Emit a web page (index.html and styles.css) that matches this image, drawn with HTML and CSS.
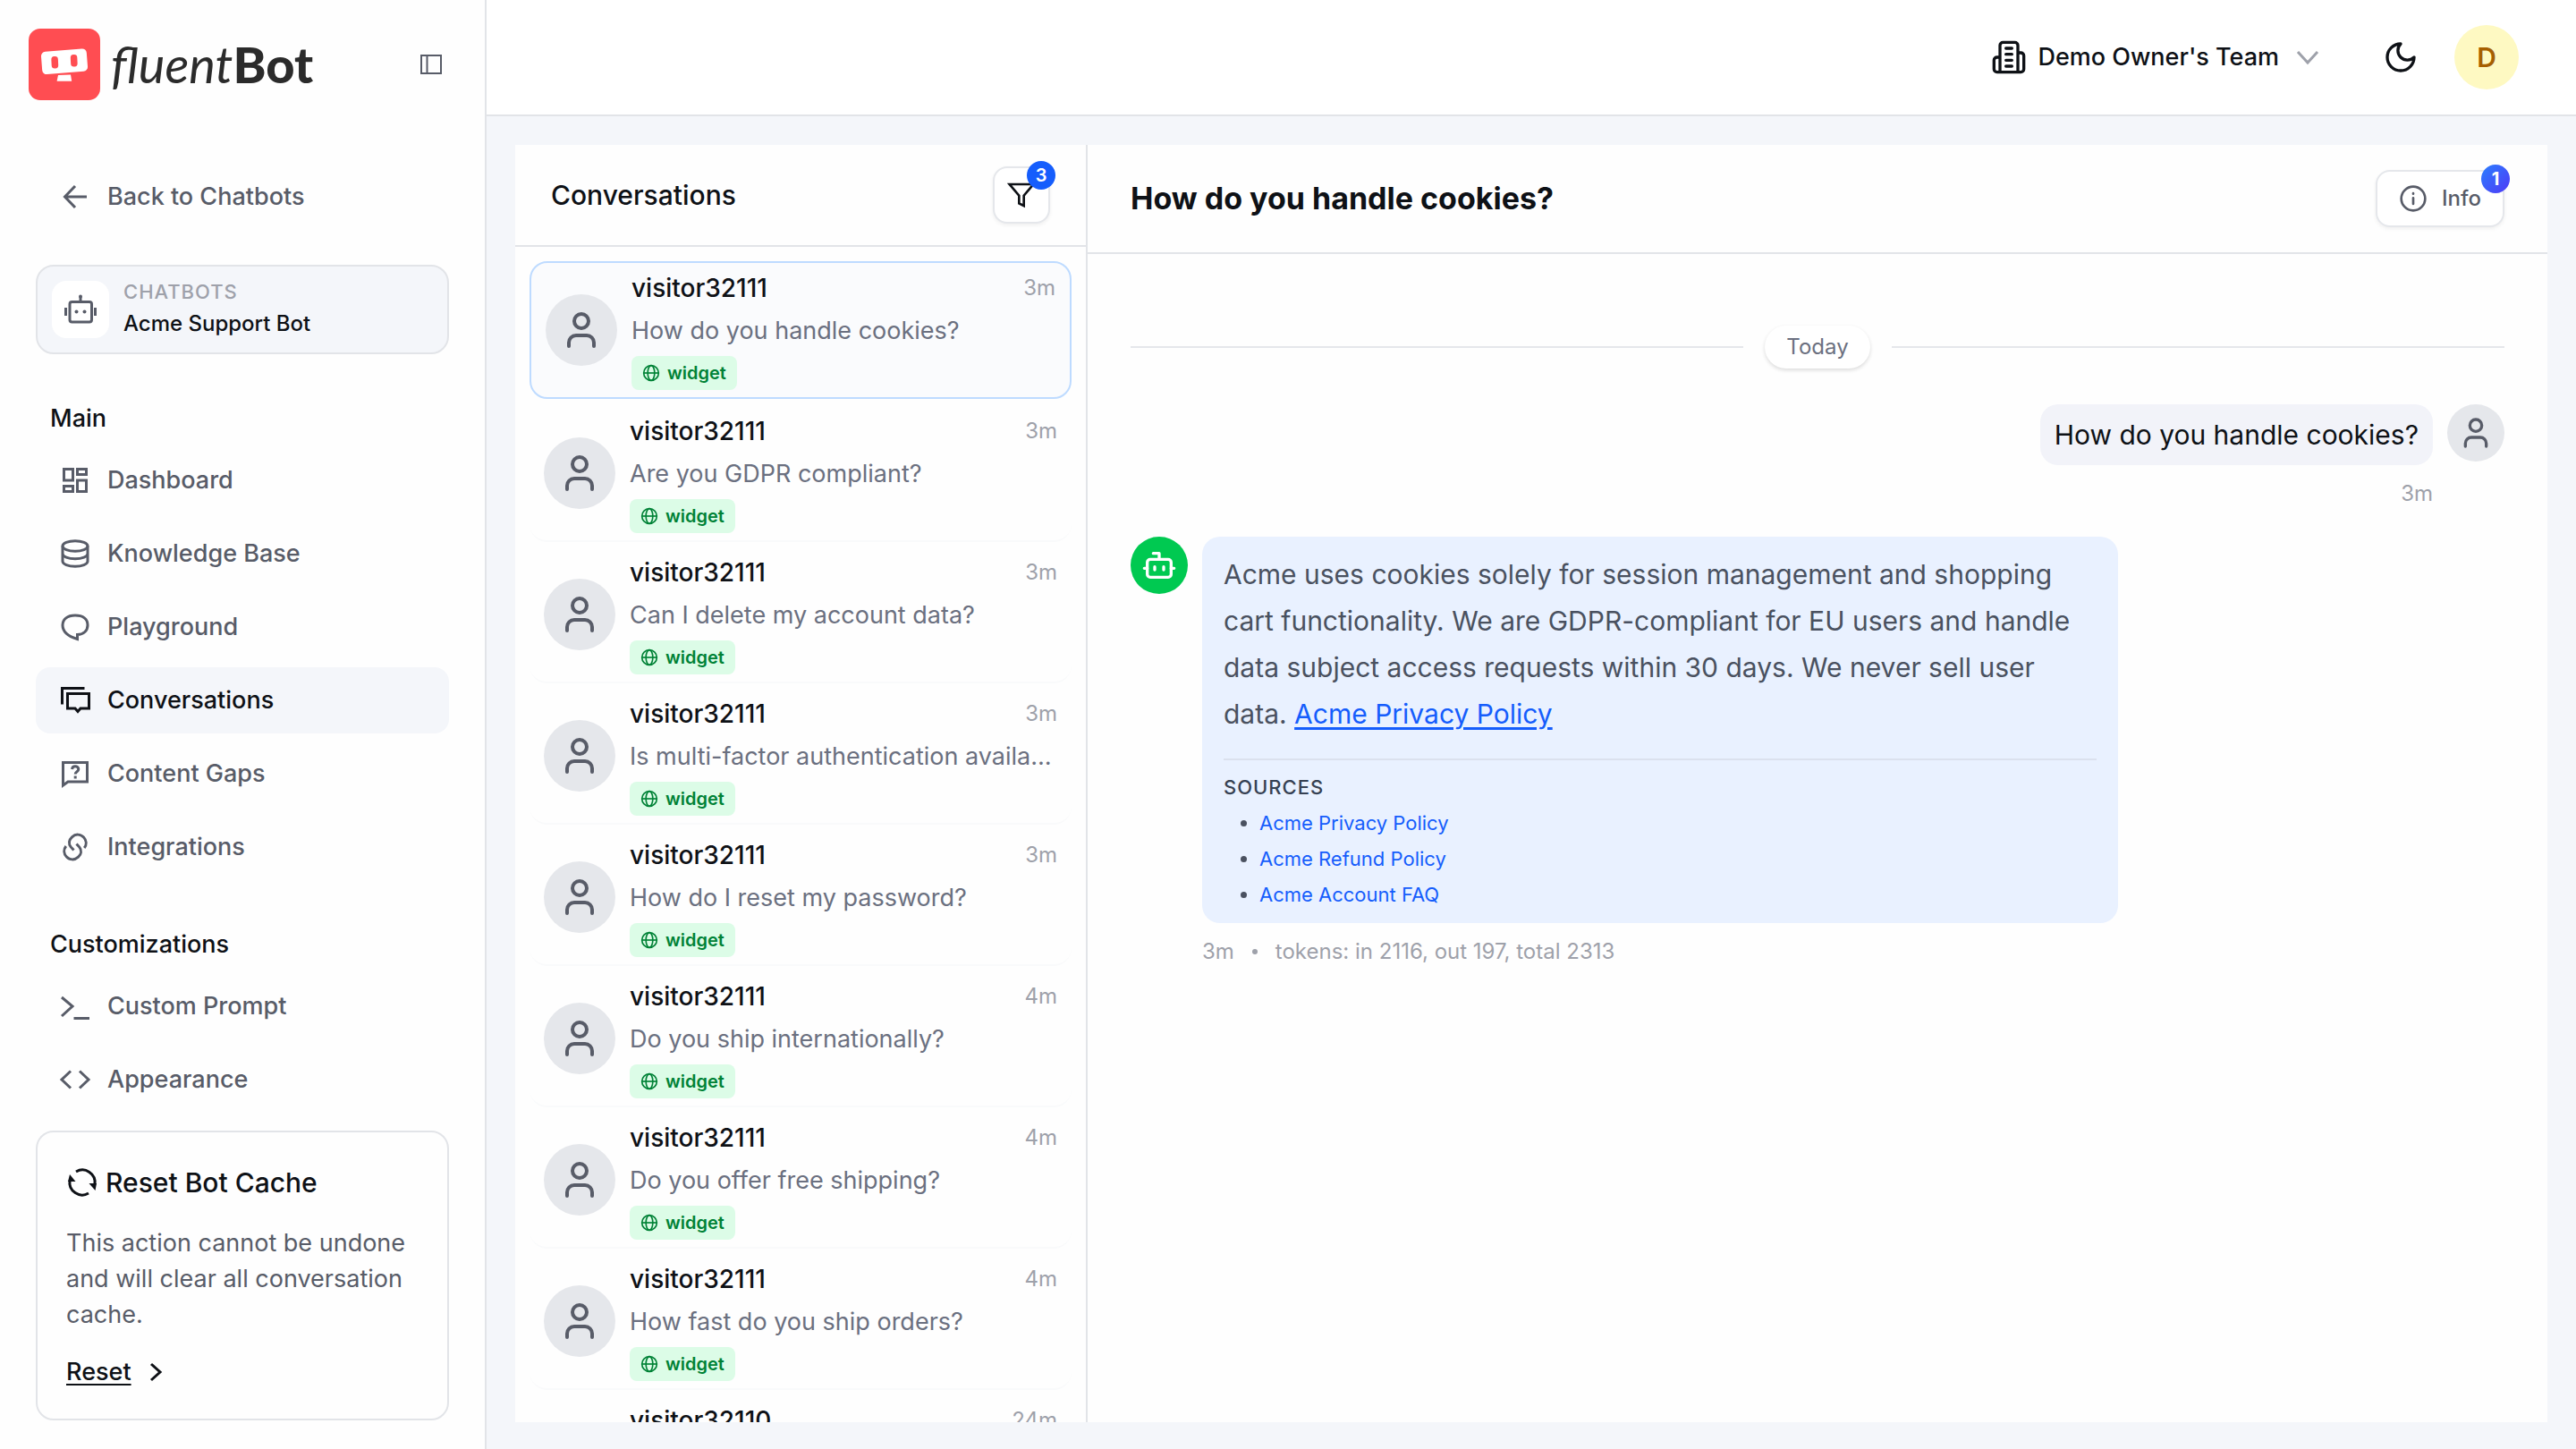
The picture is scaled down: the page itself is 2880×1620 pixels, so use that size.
FILE: index.html
```html
<!DOCTYPE html>
<html lang="en">
<head>
    <meta charset="UTF-8">
    <meta name="viewport" content="width=device-width, initial-scale=1.0">
    <title>Conversations - fluentBot</title>
    <link rel="stylesheet" href="styles.css">
</head>
<body>
    <!-- shared icons -->
    <svg class="sprite" aria-hidden="true">
        <symbol id="i-user" viewBox="0 0 24 24"><path d="M19 21v-2a4 4 0 0 0-4-4H9a4 4 0 0 0-4 4v2"/><circle cx="12" cy="7" r="4"/></symbol>
        <symbol id="i-globe" viewBox="0 0 24 24"><circle cx="12" cy="12" r="10"/><ellipse cx="12" cy="12" rx="4.6" ry="10"/><path d="M2 12h20"/></symbol>
    </svg>

    <aside class="sidebar">
        <div class="brand">
            <a href="#" class="logo" aria-label="fluentBot">
                <svg class="logo-mark" viewBox="0 0 80 80">
                    <rect width="80" height="80" rx="13" fill="#ff4d52"/>
                    <rect x="14.5" y="24" width="51" height="25.5" rx="5" fill="#fff" transform="rotate(-4.5 40 36.7)"/>
                    <rect x="25.5" y="31" width="7.5" height="13.5" rx="3.5" fill="#ff4d52" transform="rotate(-3 29 37)"/>
                    <rect x="47" y="29" width="7.5" height="13.5" rx="3.5" fill="#ff4d52" transform="rotate(-3 51 36)"/>
                    <path d="M33 52l14-.6 1.2 7.4H31.6z" fill="#fff"/>
                </svg>
                <span class="logo-text"><em>fluent</em><b>Bot</b></span>
            </a>
            <button class="collapse" aria-label="Collapse sidebar">
                <svg viewBox="0 0 24 24"><path d="M1 2h22v20H1zM7.5 2v20"/></svg>
            </button>
        </div>

        <a href="#" class="nav-item back">
            <svg viewBox="0 0 32 32"><path d="M29 16H5M16 4L4.500 16 16 28"/></svg>
            Back to Chatbots
        </a>

        <div class="bot-card">
            <span class="bot-icon">
                <svg viewBox="0 0 36 36"><rect x="6" y="9.500" width="24.500" height="22.500" rx="2.500"/><path d="M18 9V4M1.500 16v9M34.500 16v9"/><g class="solid"><circle cx="18" cy="3.500" r="2"/><circle cx="13.500" cy="20.500" r="2"/><circle cx="22.500" cy="20.500" r="2"/></g></svg>
            </span>
            <div class="bot-info">
                <span class="bot-label">CHATBOTS</span>
                <span class="bot-name">Acme Support Bot</span>
            </div>
        </div>

        <nav>
            <h3 class="nav-title">Main</h3>
            <div class="nav-list">
                <a href="#" class="nav-item">
                    <svg viewBox="0 0 32 32"><path d="M3.500 3.500h10v12.500h-10zM18.500 3.500h10v6h-10zM3.500 22.500h10v6h-10zM18.500 16h10v12.500h-10z"/></svg>
                    Dashboard
                </a>
                <a href="#" class="nav-item">
                    <svg viewBox="0 0 32 32"><ellipse cx="16" cy="7.500" rx="14" ry="5.800"/><path d="M2 7.500v17c0 3.200 6.300 5.800 14 5.800s14-2.600 14-5.800v-17M2 16c0 3.200 6.300 5.800 14 5.800S30 19.200 30 16"/></svg>
                    Knowledge Base
                </a>
                <a href="#" class="nav-item">
                    <svg viewBox="0 0 32 32"><path d="M18.500 29.500v-5c7 0 11.500-4.500 11.500-10.500C30 7 25 3 16 3S2 7.500 2 14c0 8 6.500 12.500 16.500 15.500z"/></svg>
                    Playground
                </a>
                <a href="#" class="nav-item active" aria-current="page">
                    <svg viewBox="0 0 32 32"><path d="M26.500 2.500H1.500v18M7.500 8.500h24v16.500H22L19 28.500 16 25H7.500z"/></svg>
                    Conversations
                </a>
                <a href="#" class="nav-item">
                    <svg viewBox="0 0 32 32"><path d="M2.500 3.500h27v21.500H8L2.500 29z"/><path d="M12.500 11c.3-2 1.700-3.200 3.600-3.200 2.100 0 3.700 1.300 3.700 3.200 0 2.700-3.600 2.800-3.600 5.500M16.200 18.500v3"/></svg>
                    Content Gaps
                </a>
                <a href="#" class="nav-item">
                    <svg viewBox="0 0 32 32"><path d="M14.500 19.500l-3.300-3.600C8.500 12.500 9 8 12.500 4.800c4-3.700 9.500-3.500 13 .2 3.500 3.700 3.500 8.500.7 12M17.500 12.500l3.300 3.600c2.700 3.400 2.200 7.900-1.300 11.100-4 3.700-9.500 3.500-13-.2C3 23.300 3 18.500 5.800 15"/></svg>
                    Integrations
                </a>
            </div>

            <h3 class="nav-title">Customizations</h3>
            <div class="nav-list">
                <a href="#" class="nav-item">
                    <svg viewBox="0 0 32 32"><path d="M1 6l12 10L1 27M14.500 29.500H32"/></svg>
                    Custom Prompt
                </a>
                <a href="#" class="nav-item">
                    <svg viewBox="0 0 32 32"><path d="M11 6.500L1 16l10 9.500M21 6.500L31 16l-10 9.500"/></svg>
                    Appearance
                </a>
            </div>
        </nav>

        <section class="reset-card">
            <h2 class="reset-title">
                <svg viewBox="0 0 36 36"><path d="M11 6A14 14 0 0 1 32 20M25 30A14 14 0 0 1 4 16"/><path class="solid" d="M25.500 19h8.500L32.500 27zM2 17h8.500L4 9z"/></svg>
                Reset Bot Cache
            </h2>
            <p class="reset-text">This action cannot be undone and will clear all conversation cache.</p>
            <button class="reset-btn">
                <span>Reset</span>
                <svg viewBox="0 0 24 24"><path d="M6 3l10 9-10 9"/></svg>
            </button>
        </section>
    </aside>

    <div class="main">
        <header class="topbar">
            <button class="team">
                <svg class="team-icon" viewBox="0 0 24 24"><path d="M6 22V4a2 2 0 0 1 2-2h8a2 2 0 0 1 2 2v18zM6 12H4a2 2 0 0 0-2 2v6a2 2 0 0 0 2 2h2M18 9h2a2 2 0 0 1 2 2v9a2 2 0 0 1-2 2h-2M10 6h4M10 10h4M10 14h4M10 18h4"/></svg>
                Demo Owner's Team
                <svg class="team-arrow" viewBox="0 0 24 24"><path d="M1 6l11 12L23 6"/></svg>
            </button>
            <button class="theme" aria-label="Toggle theme">
                <svg viewBox="0 0 24 24"><path d="M12 3a6 6 0 0 0 9 9 9 9 0 1 1-9-9z"/></svg>
            </button>
            <button class="profile">D</button>
        </header>

        <main class="panel">
            <section class="list-pane">
                <div class="list-header">
                    <h2>Conversations</h2>
                    <button class="filter" aria-label="Filter">
                        <svg viewBox="0 0 24 24"><path d="M22 3H2l8 9.460V19l4 2v-8.540z"/></svg>
                        <span class="count">3</span>
                    </button>
                </div>
                <div class="list">
                    <a href="#" class="item selected">
                        <span class="avatar"><svg><use href="#i-user"/></svg></span>
                        <div class="item-body">
                            <div class="item-top"><span class="name">visitor32111</span><time>3m</time></div>
                            <p class="preview">How do you handle cookies?</p>
                            <span class="tag"><svg><use href="#i-globe"/></svg>widget</span>
                        </div>
                    </a>
                    <a href="#" class="item">
                        <span class="avatar"><svg><use href="#i-user"/></svg></span>
                        <div class="item-body">
                            <div class="item-top"><span class="name">visitor32111</span><time>3m</time></div>
                            <p class="preview">Are you GDPR compliant?</p>
                            <span class="tag"><svg><use href="#i-globe"/></svg>widget</span>
                        </div>
                    </a>
                    <a href="#" class="item">
                        <span class="avatar"><svg><use href="#i-user"/></svg></span>
                        <div class="item-body">
                            <div class="item-top"><span class="name">visitor32111</span><time>3m</time></div>
                            <p class="preview">Can I delete my account data?</p>
                            <span class="tag"><svg><use href="#i-globe"/></svg>widget</span>
                        </div>
                    </a>
                    <a href="#" class="item">
                        <span class="avatar"><svg><use href="#i-user"/></svg></span>
                        <div class="item-body">
                            <div class="item-top"><span class="name">visitor32111</span><time>3m</time></div>
                            <p class="preview">Is multi-factor authentication available?</p>
                            <span class="tag"><svg><use href="#i-globe"/></svg>widget</span>
                        </div>
                    </a>
                    <a href="#" class="item">
                        <span class="avatar"><svg><use href="#i-user"/></svg></span>
                        <div class="item-body">
                            <div class="item-top"><span class="name">visitor32111</span><time>3m</time></div>
                            <p class="preview">How do I reset my password?</p>
                            <span class="tag"><svg><use href="#i-globe"/></svg>widget</span>
                        </div>
                    </a>
                    <a href="#" class="item">
                        <span class="avatar"><svg><use href="#i-user"/></svg></span>
                        <div class="item-body">
                            <div class="item-top"><span class="name">visitor32111</span><time>4m</time></div>
                            <p class="preview">Do you ship internationally?</p>
                            <span class="tag"><svg><use href="#i-globe"/></svg>widget</span>
                        </div>
                    </a>
                    <a href="#" class="item">
                        <span class="avatar"><svg><use href="#i-user"/></svg></span>
                        <div class="item-body">
                            <div class="item-top"><span class="name">visitor32111</span><time>4m</time></div>
                            <p class="preview">Do you offer free shipping?</p>
                            <span class="tag"><svg><use href="#i-globe"/></svg>widget</span>
                        </div>
                    </a>
                    <a href="#" class="item">
                        <span class="avatar"><svg><use href="#i-user"/></svg></span>
                        <div class="item-body">
                            <div class="item-top"><span class="name">visitor32111</span><time>4m</time></div>
                            <p class="preview">How fast do you ship orders?</p>
                            <span class="tag"><svg><use href="#i-globe"/></svg>widget</span>
                        </div>
                    </a>
                    <a href="#" class="item">
                        <div class="item-body no-avatar">
                            <div class="item-top"><span class="name">visitor32110</span><time>24m</time></div>
                        </div>
                    </a>
                </div>
            </section>

            <section class="chat">
                <div class="chat-header">
                    <h1>How do you handle cookies?</h1>
                    <button class="info">
                        <svg viewBox="0 0 24 24"><circle cx="12" cy="12" r="10"/><path d="M12 11.500v5M12 7.600v.4"/></svg>
                        Info
                        <span class="count count-info">1</span>
                    </button>
                </div>
                <div class="messages">
                    <div class="day"><span>Today</span></div>

                    <div class="msg msg-user">
                        <div class="msg-col">
                            <div class="bubble">How do you handle cookies?</div>
                            <div class="meta">3m</div>
                        </div>
                        <span class="avatar small"><svg><use href="#i-user"/></svg></span>
                    </div>

                    <div class="msg msg-bot">
                        <span class="avatar small bot">
                            <svg viewBox="0 0 24 24"><path d="M12 8V4H8M2 14h2M20 14h2M15 13v2M9 13v2"/><rect x="4" y="8" width="16" height="12" rx="2"/></svg>
                        </span>
                        <div class="msg-col">
                            <div class="bubble">
                                <p>Acme uses cookies solely for session management and shopping cart functionality. We are GDPR-compliant for EU users and handle data subject access requests within 30 days. We never sell user data. <a href="#">Acme Privacy Policy</a></p>
                                <div class="sources">
                                    <h4>SOURCES</h4>
                                    <ul>
                                        <li><a href="#">Acme Privacy Policy</a></li>
                                        <li><a href="#">Acme Refund Policy</a></li>
                                        <li><a href="#">Acme Account FAQ</a></li>
                                    </ul>
                                </div>
                            </div>
                            <div class="meta"><span>3m</span><i></i><span>tokens: in 2116, out 197, total 2313</span></div>
                        </div>
                    </div>
                </div>
            </section>
        </main>
    </div>
</body>
</html>
```
FILE: styles.css
```css
* {
    box-sizing: border-box;
    margin: 0;
    padding: 0;
}

body {
    font-family: Inter, "Liberation Sans", sans-serif;
    font-size: 27px;
    line-height: 40px;
    color: #0e1116;
    background: #f4f6fa;
    display: flex;
    height: 100vh;
    overflow: hidden;
}

a {
    color: inherit;
    text-decoration: none;
}

button {
    font: inherit;
    color: inherit;
    background: none;
    border: none;
    cursor: pointer;
}

svg {
    flex-shrink: 0;
    fill: none;
    stroke: currentColor;
    stroke-width: 3;
    overflow: visible;
}

svg .solid {
    fill: currentColor;
    stroke: none;
}

.sprite {
    display: none;
}

/* sidebar */
.sidebar {
    width: 544px;
    flex-shrink: 0;
    display: flex;
    flex-direction: column;
    padding: 32px 40px;
    background: #fefefe;
    border-right: 2px solid #e2e4e8;
}

.brand {
    display: flex;
    align-items: center;
    justify-content: space-between;
    margin: 0 8px 71px -8px;
}

.logo {
    display: flex;
    align-items: center;
    gap: 12px;
}

.logo-mark {
    width: 80px;
    height: 80px;
    stroke: none;
}

.logo-text {
    font-family: Lato, sans-serif;
    font-size: 56px;
    line-height: 80px;
    color: #2b2b2b;
}

.logo-text b {
    font-weight: 900;
}

.collapse,
.collapse svg {
    display: block;
    width: 24px;
    height: 24px;
    color: #585c68;
    stroke-width: 2;
}

.nav-item {
    display: flex;
    align-items: center;
    gap: 20px;
    height: 74px;
    padding: 0 28px;
    border-radius: 16px;
    font-weight: 500;
    color: #585c68;
}

.nav-item svg {
    width: 32px;
    height: 32px;
}

.nav-item.active {
    background: #f4f6fa;
    color: #0e1116;
}

.bot-card {
    display: flex;
    gap: 16px;
    margin-top: 39px;
    padding: 16px;
    border: 2px solid #e2e4e8;
    border-radius: 20px;
    background: #f4f6fa;
}

.bot-icon {
    width: 64px;
    height: 64px;
    display: flex;
    align-items: center;
    justify-content: center;
    border-radius: 16px;
    background: #fff;
    color: #585c68;
}

.bot-icon svg {
    width: 36px;
    height: 36px;
}

.bot-info {
    display: flex;
    flex-direction: column;
    gap: 8px;
    font-weight: 500;
}

.bot-label {
    font-size: 22px;
    line-height: 24px;
    letter-spacing: 1px;
    color: #9ea1aa;
}

.bot-name {
    font-size: 24px;
    line-height: 32px;
}

.nav-title {
    margin: 52px 16px 12px;
    font-size: 27px;
    font-weight: 500;
}

.nav-list {
    display: flex;
    flex-direction: column;
    gap: 8px;
}

.reset-card {
    margin-top: auto;
    padding: 32px;
    border: 2px solid #e2e4e8;
    border-radius: 20px;
}

.reset-title {
    display: flex;
    align-items: center;
    gap: 8px;
    font-size: 30px;
    line-height: 48px;
    font-weight: 500;
}

.reset-title svg {
    width: 36px;
    height: 36px;
}

.reset-text {
    margin: 24px 0;
    color: #585c68;
}

.reset-btn {
    display: flex;
    align-items: center;
    gap: 16px;
    font-weight: 500;
}

.reset-btn span {
    text-decoration: underline;
    text-underline-offset: 4px;
}

.reset-btn svg {
    width: 24px;
    height: 24px;
}

/* top bar */
.main {
    flex: 1;
    min-width: 0;
    display: flex;
    flex-direction: column;
}

.topbar {
    height: 130px;
    flex-shrink: 0;
    display: flex;
    align-items: center;
    justify-content: flex-end;
    gap: 40px;
    padding: 0 64px;
    background: #fff;
    border-bottom: 2px solid #e2e4e8;
}

.team {
    display: flex;
    align-items: center;
    gap: 12px;
    margin-right: 32px;
    font-weight: 500;
}

.team-icon,
.theme svg {
    display: block;
    width: 40px;
    height: 40px;
    stroke-width: 2;
    stroke-linecap: round;
    stroke-linejoin: round;
}

.team-arrow {
    width: 24px;
    height: 24px;
    margin-left: 8px;
    color: #9ea1aa;
    stroke-width: 3;
}

.profile {
    width: 72px;
    height: 72px;
    border-radius: 50%;
    background: #fef9c2;
    color: #a65f00;
    font-size: 30px;
    font-weight: 600;
}

/* conversation list */
.panel {
    flex: 1;
    min-height: 0;
    display: flex;
    margin: 32px 32px 30px;
    background: #fefefe;
}

.list-pane {
    width: 640px;
    flex-shrink: 0;
    display: flex;
    flex-direction: column;
    border-right: 2px solid #e2e4e8;
}

.list-header {
    height: 114px;
    flex-shrink: 0;
    display: flex;
    align-items: center;
    justify-content: space-between;
    padding: 0 40px;
    border-bottom: 2px solid #e2e4e8;
}

.list-header h2 {
    font-size: 30px;
    font-weight: 500;
}

.filter,
.info {
    position: relative;
    display: flex;
    align-items: center;
    justify-content: center;
    height: 64px;
    border: 2px solid #e5e7eb;
    border-radius: 16px;
    background: #fff;
    box-shadow: 0 2px 4px rgba(0, 0, 0, 0.06);
}

.filter {
    width: 64px;
}

.filter svg {
    width: 32px;
    height: 32px;
    stroke-width: 2;
}

.count {
    position: absolute;
    top: -8px;
    right: -8px;
    width: 32px;
    height: 32px;
    border-radius: 50%;
    background: #155dfc;
    color: #fff;
    font-size: 20px;
    line-height: 32px;
    font-weight: 600;
    text-align: center;
}

.list {
    flex: 1;
    min-height: 0;
    display: flex;
    flex-direction: column;
    gap: 6px;
    padding: 16px 16px 0;
    overflow: hidden;
}

.item {
    display: flex;
    flex-shrink: 0;
    align-items: center;
    gap: 16px;
    padding: 8px 16px;
    border-bottom: 2px solid #f9fafb;
    border-radius: 20px;
}

.item.selected {
    margin-bottom: 2px;
    border: 2px solid #bedbff;
    background: #fafbfd;
}

.avatar {
    width: 80px;
    height: 80px;
    flex-shrink: 0;
    display: flex;
    align-items: center;
    justify-content: center;
    border-radius: 50%;
    background: #e5e7eb;
    color: #585c68;
}

.avatar svg {
    width: 48px;
    height: 48px;
    stroke-width: 2;
    stroke-linecap: round;
    stroke-linejoin: round;
}

.item-body {
    flex: 1;
    min-width: 0;
    display: flex;
    flex-direction: column;
    align-items: flex-start;
    gap: 8px;
}

.no-avatar {
    margin-left: 96px;
}

.item-top {
    width: 100%;
    display: flex;
    justify-content: space-between;
}

.name {
    font-size: 28px;
    font-weight: 500;
}

time {
    font-size: 24px;
    color: #9ea1aa;
}

.preview {
    width: 100%;
    overflow: hidden;
    white-space: nowrap;
    text-overflow: ellipsis;
    color: #6b7080;
}

.tag {
    display: flex;
    align-items: center;
    gap: 8px;
    height: 38px;
    padding: 0 12px;
    border-radius: 8px;
    background: #dcfce7;
    color: #008236;
    font-size: 20px;
    font-weight: 600;
}

.tag svg {
    width: 20px;
    height: 20px;
    stroke-width: 2;
}

/* chat */
.chat {
    flex: 1;
    min-width: 0;
}

.chat-header {
    height: 122px;
    display: flex;
    align-items: center;
    justify-content: space-between;
    padding: 0 48px;
    border-bottom: 2px solid #e2e4e8;
}

.chat-header h1 {
    font-size: 34px;
    font-weight: 700;
}

.info {
    gap: 16px;
    padding: 0 24px;
    font-size: 24px;
    font-weight: 500;
    color: #585c68;
}

.info svg {
    width: 32px;
    height: 32px;
    stroke-width: 2;
    stroke-linecap: round;
}

.count-info {
    background: linear-gradient(135deg, #2b7fff, #4f39f6);
    font-weight: 700;
}

.messages {
    display: flex;
    flex-direction: column;
    padding: 80px 48px;
}

.day {
    display: flex;
    align-items: center;
    gap: 24px;
    margin-bottom: 40px;
    font-size: 24px;
    color: #6b7080;
}

.day::before,
.day::after {
    content: "";
    flex: 1;
    height: 2px;
    background: #e5e7eb;
}

.day span {
    padding: 4px 24px;
    border-radius: 24px;
    background: #fff;
    box-shadow: 0 2px 4px rgba(0, 0, 0, 0.14);
}

.msg {
    display: flex;
    align-items: flex-start;
    gap: 16px;
}

.msg-user {
    justify-content: flex-end;
    margin-bottom: 28px;
}

.msg-user .msg-col {
    display: flex;
    flex-direction: column;
    align-items: flex-end;
}

.avatar.small {
    width: 64px;
    height: 64px;
}

.avatar.small svg {
    width: 40px;
    height: 40px;
}

.avatar.bot {
    background: #00c951;
    color: #fff;
}

.bubble {
    border-radius: 20px;
    font-size: 30px;
}

.msg-user .bubble {
    padding: 14px 16px;
    background: #f2f3f9;
}

.msg-bot .bubble {
    max-width: 1024px;
    padding: 16px 24px 12px;
    background: #e9f1ff;
    color: #4a5160;
    line-height: 52px;
}

.bubble a {
    color: #155dfc;
}

.bubble p a {
    text-decoration: underline;
    text-underline-offset: 4px;
}

.sources {
    margin-top: 24px;
    padding-top: 10px;
    border-top: 2px solid #dbe1ee;
    font-size: 22px;
    line-height: 40px;
}

.sources h4 {
    font-size: 22px;
    font-weight: 500;
    letter-spacing: 1px;
    color: #364153;
}

.sources ul {
    padding-left: 40px;
}

.meta {
    display: flex;
    align-items: center;
    gap: 20px;
    margin-top: 12px;
    font-size: 24px;
    color: #9ea1aa;
}

.meta i {
    width: 6px;
    height: 6px;
    border-radius: 50%;
    background: #9ea1aa;
}
```
